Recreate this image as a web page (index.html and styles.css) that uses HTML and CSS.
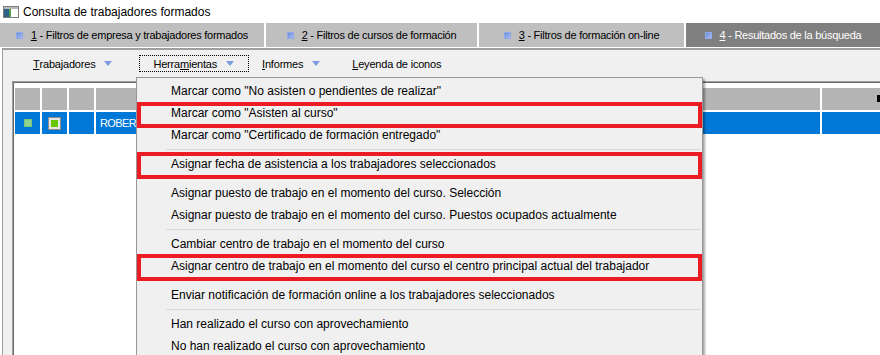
FILE: index.html
```html
<!DOCTYPE html>
<html lang="es">
<head>
    <meta charset="UTF-8">
    <title>Consulta de trabajadores formados</title>
    <link rel="stylesheet" href="styles.css">
</head>
<body>
    <div class="titlebar">
        <svg class="app-icon" width="16" height="12" viewBox="0 0 16 12">
            <rect x="0.5" y="0.5" width="15" height="11" fill="#f4f4f4" stroke="#7d7d7d"/>
            <rect x="1" y="1" width="14" height="2" fill="#b9b9b9"/>
            <rect x="1" y="3" width="5" height="8" fill="#2e5f86"/>
            <rect x="6" y="3" width="2" height="8" fill="#4f9b4c"/>
            <rect x="8" y="3" width="7" height="8" fill="#ffffff"/>
        </svg>
        <span>Consulta de trabajadores formados</span>
    </div>

    <div class="tabs">
        <div class="tab tab-1"><span class="tab-dot"></span><span><u>1</u> - Filtros de empresa y trabajadores formados</span></div>
        <div class="tab tab-2"><span class="tab-dot"></span><span><u>2</u> - Filtros de cursos de formación</span></div>
        <div class="tab tab-3"><span class="tab-dot"></span><span><u>3</u> - Filtros de formación on-line</span></div>
        <div class="tab tab-4 active"><span class="tab-dot"></span><span><u>4</u> - Resultados de la búsqueda</span></div>
    </div>

    <div class="panel">
        <div class="toolbar">
            <div class="tool tool-workers"><u>T</u>rabajadores<span class="caret"></span></div>
            <div class="tool tool-tools focused">Herra<u>m</u>ientas<span class="caret"></span></div>
            <div class="tool tool-reports"><u>I</u>nformes<span class="caret"></span></div>
            <div class="tool tool-legend"><u>L</u>eyenda de iconos</div>
        </div>

        <div class="grid">
            <div class="grid-row grid-head">
                <div class="cell c-icon"></div>
                <div class="cell c-icon"></div>
                <div class="cell c-icon"></div>
                <div class="cell c-name"></div>
                <div class="cell c-next"><span class="head-glyph"></span></div>
            </div>
            <div class="grid-row grid-selected">
                <div class="cell c-icon"><span class="flag-green"></span></div>
                <div class="cell c-icon"><span class="flag-check"></span></div>
                <div class="cell c-icon"></div>
                <div class="cell c-name">ROBERTO</div>
                <div class="cell c-next"></div>
            </div>
        </div>
    </div>

    <div class="menu">
        <div class="menu-item">Marcar como "No asisten o pendientes de realizar"</div>
        <div class="menu-item marked">Marcar como "Asisten al curso"</div>
        <div class="menu-item">Marcar como "Certificado de formación entregado"</div>
        <div class="menu-sep"></div>
        <div class="menu-item marked marked-up">Asignar fecha de asistencia a los trabajadores seleccionados</div>
        <div class="menu-sep"></div>
        <div class="menu-item">Asignar puesto de trabajo en el momento del curso. Selección</div>
        <div class="menu-item">Asignar puesto de trabajo en el momento del curso. Puestos ocupados actualmente</div>
        <div class="menu-sep"></div>
        <div class="menu-item">Cambiar centro de trabajo en el momento del curso</div>
        <div class="menu-item marked marked-up">Asignar centro de trabajo en el momento del curso el centro principal actual del trabajador</div>
        <div class="menu-sep"></div>
        <div class="menu-item">Enviar notificación de formación online a los trabajadores seleccionados</div>
        <div class="menu-sep"></div>
        <div class="menu-item">Han realizado el curso con aprovechamiento</div>
        <div class="menu-item">No han realizado el curso con aprovechamiento</div>
    </div>
</body>
</html>
```

FILE: styles.css
```css
html, body {
    margin: 0;
    padding: 0;
}
body {
    position: relative;
    width: 880px;
    height: 355px;
    overflow: hidden;
    background: #ffffff;
    font-family: "Liberation Sans", Arial, sans-serif;
    color: #000;
}
u {
    text-decoration: underline;
    text-underline-offset: 1px;
}

/* window title */
.titlebar {
    height: 23px;
    display: flex;
    align-items: center;
    font-size: 12px;
    background: #fff;
}
.app-icon {
    margin: 1px 4px 0 3px;
}

/* tabs */
.tabs {
    display: flex;
    gap: 2px;
    height: 24px;
    font-size: 11px;
    letter-spacing: -0.25px;
    border-bottom: 1px solid #ffffff;
}
.tab {
    display: flex;
    align-items: center;
    justify-content: center;
    gap: 8px;
    background: #bfbfbf;
    box-sizing: border-box;
}
.tab-1 { width: 264px; }
.tab-2 { width: 211px; }
.tab-3 { width: 205px; }
.tab-4 { flex: 1; }
.tab.active {
    background: #808080;
    color: #fff;
}
.tab-dot {
    width: 7px;
    height: 7px;
    background: linear-gradient(135deg, #6a8ad8, #a9bff2);
    box-sizing: border-box;
    border: 1px solid #8ea8e8;
}

/* content panel */
.panel {
    background: #f0f0f0;
    border-top: 2px solid #a0a0a0;
    border-left: 1px solid #a0a0a0;
    margin-left: 2px;
    height: 400px;
}
.toolbar {
    display: flex;
    align-items: center;
    height: 27px;
    padding-left: 16px;
    font-size: 11px;
    letter-spacing: -0.2px;
}
.tool {
    display: flex;
    align-items: center;
    height: 17px;
    padding: 0 14px 0 13px;
    box-sizing: border-box;
    border: 1px dotted transparent;
}
.tool.focused {
    border-color: #000;
}
.tool-tools { margin-left: 12px; }
.tool-reports { margin-left: -1px; }
.tool-legend { margin-left: 3px; }
.caret {
    width: 0;
    height: 0;
    margin-left: 9px;
    border-left: 4.5px solid transparent;
    border-right: 4.5px solid transparent;
    border-top: 5px solid #7c9de0;
}

/* grid */
.grid {
    margin: 4px 0 0 9px;
    background: #fff;
    border-top: 1px solid #a0a0a0;
    border-left: 1px solid #a0a0a0;
    box-shadow: inset 1px 1px 0 #696969;
    padding: 6px 0 0 2px;
    height: 400px;
}
.grid-row {
    display: flex;
    gap: 2px;
    height: 22px;
    margin-bottom: 2px;
}
.cell {
    display: flex;
    align-items: center;
    justify-content: center;
    font-size: 11px;
    flex-shrink: 0;
}
.grid-head .cell { background: #b4b4b4; }
.grid-selected .cell {
    background: #0078d7;
    color: #fff;
}
.c-icon { width: 25px; }
.c-name {
    width: 724px;
    justify-content: flex-start;
    padding-left: 4px;
    box-sizing: border-box;
    letter-spacing: -0.6px;
}
.c-next {
    width: 120px;
    justify-content: flex-start;
    padding-left: 55px;
    box-sizing: border-box;
}
.head-glyph {
    width: 3px;
    height: 7px;
    margin-top: -2px;
    background: #000;
}
.flag-green {
    width: 8px;
    height: 8px;
    background: #8fd48f;
    border: 1px solid #7cc47c;
    box-sizing: border-box;
}
.flag-check {
    width: 11px;
    height: 11px;
    background: #66c600;
    border: 2px solid #e6e6e6;
    outline: 1px solid #8c8c8c;
    box-sizing: border-box;
}

/* dropdown menu */
.menu {
    position: absolute;
    left: 136px;
    top: 77px;
    width: 567px;
    height: 300px;
    box-sizing: border-box;
    padding-top: 2px;
    background: #f0f0f0;
    border: 1px solid #979797;
    box-shadow: 2px 2px 2px rgba(0, 0, 0, 0.35);
    font-size: 12px;
}
.menu-item {
    position: relative;
    height: 22px;
    line-height: 22px;
    padding-left: 34px;
    white-space: nowrap;
}
.menu-sep {
    height: 1px;
    margin: 3px 2px 3px 29px;
    background: #d7d7d7;
}
.marked::after {
    content: "";
    position: absolute;
    left: 0;
    right: 0;
    top: 0;
    bottom: -4px;
    border: 4px solid #ec1c24;
}
.marked-up::after {
    top: -1px;
}
```
